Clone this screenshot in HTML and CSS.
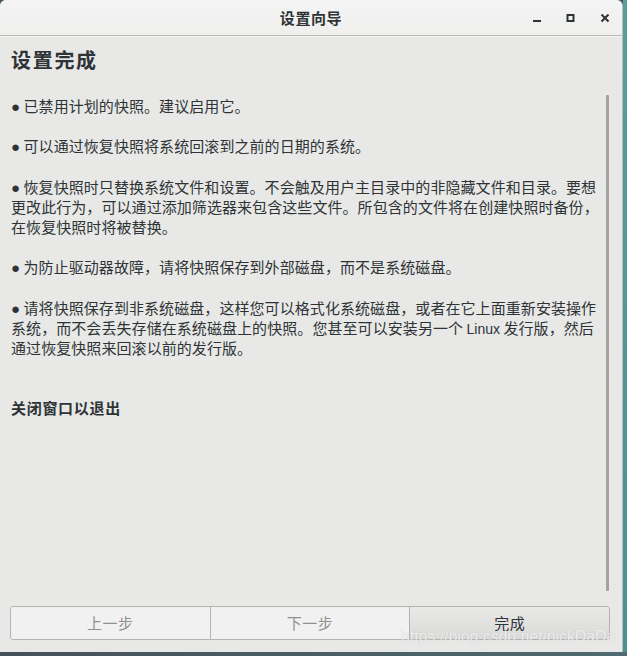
FILE: index.html
```html
<!DOCTYPE html>
<html lang="zh-CN">
<head>
<meta charset="utf-8">
<title>设置向导</title>
<link rel="stylesheet" href="styles.css">
</head>
<body>
<div class="desktop">
  <div class="window">
    <div class="titlebar">
      <div class="tb-side"></div>
      <div class="tb-title">设置向导</div>
      <div class="tb-controls">
        <span class="ctl">
          <svg width="10" height="10" viewBox="0 0 10 10"><rect x="1" y="6" width="8" height="2" fill="#2e3436"/></svg>
        </span>
        <span class="ctl">
          <svg width="10" height="10" viewBox="0 0 10 10"><rect x="1.5" y="1" width="6" height="6" fill="none" stroke="#2e3436" stroke-width="2"/></svg>
        </span>
        <span class="ctl">
          <svg width="10" height="10" viewBox="0 0 10 10"><path d="M1.5 0.5 L8.5 7.5 M8.5 0.5 L1.5 7.5" stroke="#2e3436" stroke-width="2"/></svg>
        </span>
      </div>
    </div>
    <div class="main">
      <div class="text">
        <h1 class="heading">设置完成</h1>
        <p class="para"><span class="dot">●</span> 已禁用计划的快照。建议启用它。</p>
        <p class="para"><span class="dot">●</span> 可以通过恢复快照将系统回滚到之前的日期的系统。</p>
        <p class="para"><span class="dot">●</span> 恢复快照时只替换系统文件和设置。不会触及用户主目录中的非隐藏文件和目录。要想<br>更改此行为，可以通过添加筛选器来包含这些文件。所包含的文件将在创建快照时备份，<br>在恢复快照时将被替换。</p>
        <p class="para"><span class="dot">●</span> 为防止驱动器故障，请将快照保存到外部磁盘，而不是系统磁盘。</p>
        <p class="para"><span class="dot">●</span> 请将快照保存到非系统磁盘，这样您可以格式化系统磁盘，或者在它上面重新安装操作<br>系统，而不会丢失存储在系统磁盘上的快照。您甚至可以安装另一个 <span class="latin">Linux</span> 发行版，然后<br>通过恢复快照来回滚以前的发行版。</p>
        <p class="para bold">关闭窗口以退出</p>
      </div>
      <div class="scrollbar"></div>
    </div>
    <div class="buttons">
      <div class="btn disabled">上一步</div>
      <div class="btn disabled">下一步</div>
      <div class="btn primary">完成</div>
    </div>
    <div class="watermark">https://blog.csdn.net/nickDaDa</div>
  </div>
  <div class="desk-right"></div>
</div>
<div class="desk-bottom"></div>
</body>
</html>
```

FILE: styles.css
```css
* { box-sizing: border-box; }
html, body {
  margin: 0;
  padding: 0;
  width: 627px;
  height: 656px;
  overflow: hidden;
  background: #3f5563;
}
.desktop {
  display: flex;
  height: 652px;
}
.desk-right {
  flex: 1;
  background: linear-gradient(#5a9d9b, #4e8f92);
}
.desk-bottom {
  height: 4px;
  background: linear-gradient(90deg, #45515c, #4f6a72);
}
.window {
  position: relative;
  width: 623px;
  height: 652px;
  background: #e8e8e7;
  border-radius: 6px 6px 0 0;
  display: flex;
  flex-direction: column;
  font-family: "Noto Sans CJK SC", "Noto Sans", sans-serif;
  color: #2e3436;
  border-right: 1px solid #b9bcb9;
}
.titlebar {
  height: 36px;
  flex: none;
  display: grid;
  grid-template-columns: 1fr auto 1fr;
  align-items: center;
  background: linear-gradient(#f4f4f4, #efefee);
  border-bottom: 1px solid #b4b4b1;
  border-radius: 6px 6px 0 0;
  box-shadow: 0 1px 0 #f6f6f5;
}
.tb-title {
  font-size: 15px;
  font-weight: 700;
  letter-spacing: 0.6px;
  line-height: 20px;
  padding-top: 1px;
}
.tb-controls {
  display: flex;
  justify-content: flex-end;
}
.ctl {
  width: 34px;
  height: 34px;
  display: flex;
  align-items: center;
  justify-content: center;
  padding-top: 3px;
}
.main {
  flex: 1;
  display: flex;
  min-height: 0;
}
.text {
  flex: 1;
  padding-left: 11px;
}
.heading {
  margin: 12px 0 0;
  font-size: 20px;
  line-height: 24px;
  font-weight: 700;
  letter-spacing: 1.7px;
}
.para {
  margin: 0 0 20.15px;
  font-size: 15px;
  line-height: 20.15px;
  letter-spacing: 0.07px;
  white-space: nowrap;
}
.heading + .para { margin-top: 24px; }
.para.bold {
  margin-top: 40.3px;
  font-weight: 700;
  letter-spacing: 0.7px;
}
.dot {
  font-family: "Liberation Sans", sans-serif;
  font-size: 15px;
  line-height: 0;
  letter-spacing: 0;
}
.latin {
  font-family: "Liberation Sans", sans-serif;
  font-size: 14px;
  line-height: 0;
  letter-spacing: 0;
}
.scrollbar {
  width: 3px;
  margin: 59px 13px 9px 0;
  background: #a3a3a2;
  border-radius: 1px;
}
.buttons {
  flex: none;
  display: flex;
  height: 34px;
  margin: 6px 12px 12px 10px;
  border: 1px solid #b3b3b1;
  border-radius: 3px;
  overflow: hidden;
}
.btn {
  flex: 1;
  display: flex;
  align-items: center;
  justify-content: center;
  font-size: 15px;
  line-height: 18px;
  background: #f1f1f1;
  letter-spacing: 0.5px;
}
.btn + .btn { border-left: 1px solid #b3b3b1; }
.btn.disabled { color: #8f9190; }
.btn.primary {
  color: #2e3436;
  background: linear-gradient(#e9e9e8, #dadad9);
}
.watermark {
  position: absolute;
  left: 401px;
  top: 630px;
  font-family: "Liberation Sans", sans-serif;
  font-size: 15.8px;
  line-height: 14px;
  color: rgba(255, 255, 255, 0.75);
  text-shadow: 0 0 1px rgba(120, 120, 120, 0.4);
  white-space: nowrap;
  pointer-events: none;
}
```
